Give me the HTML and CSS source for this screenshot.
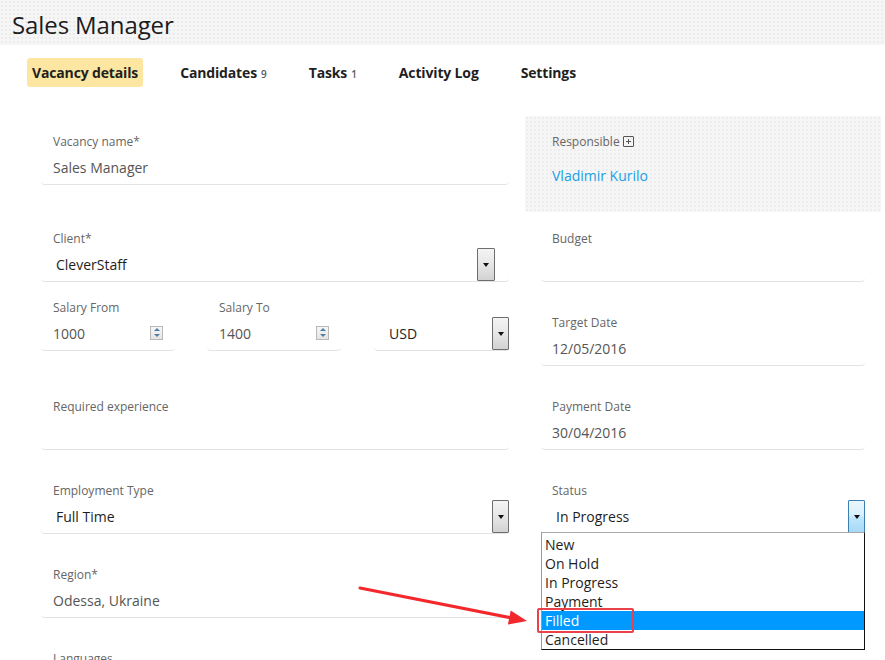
FILE: index.html
```html
<!DOCTYPE html>
<html>
<head>
<meta charset="utf-8">
<link rel="stylesheet" href="styles.css">
</head>
<body>
<div class="page">
  <header class="header"><h1 class="title">Sales Manager</h1></header>
  <nav class="tabs">
    <span class="tab active">Vacancy details</span>
    <span class="tab">Candidates <small class="count">9</small></span>
    <span class="tab">Tasks <small class="count">1</small></span>
    <span class="tab">Activity Log</span>
    <span class="tab">Settings</span>
  </nav>

  <div class="form">
    <!-- Row A -->
    <div class="cell">
      <div class="field first">
        <div class="label">Vacancy name*</div>
        <div class="value">Sales Manager</div>
      </div>
    </div>
    <div class="cell">
      <div class="resp-box">
        <div class="label flush">Responsible <span class="plus-icon"></span></div>
        <div class="resp-name">Vladimir Kurilo</div>
      </div>
    </div>

    <!-- Row B -->
    <div class="cell">
      <div class="field">
        <div class="label">Client*</div>
        <div class="value select-row"><span class="sel-text">CleverStaff</span><span class="drop-btn inset"></span></div>
      </div>
      <div class="salary-row">
        <div class="field salary">
          <div class="label">Salary From</div>
          <div class="value spin-row"><span>1000</span><span class="spinner"><i class="up"></i><i class="down"></i></span></div>
        </div>
        <div class="field salary">
          <div class="label">Salary To</div>
          <div class="value spin-row"><span>1400</span><span class="spinner"><i class="up"></i><i class="down"></i></span></div>
        </div>
        <div class="field currency">
          <div class="label">&nbsp;</div>
          <div class="value select-row"><span class="sel-text">USD</span><span class="drop-btn"></span></div>
        </div>
      </div>
    </div>
    <div class="cell">
      <div class="field">
        <div class="label r">Budget</div>
        <div class="value"></div>
      </div>
      <div class="field target">
        <div class="label r">Target Date</div>
        <div class="value r">12/05/2016</div>
      </div>
    </div>

    <!-- Row C -->
    <div class="cell">
      <div class="field">
        <div class="label">Required experience</div>
        <div class="value"></div>
      </div>
    </div>
    <div class="cell">
      <div class="field">
        <div class="label r">Payment Date</div>
        <div class="value r">30/04/2016</div>
      </div>
    </div>

    <!-- Row D -->
    <div class="cell">
      <div class="field">
        <div class="label">Employment Type</div>
        <div class="value select-row"><span class="sel-text">Full Time</span><span class="drop-btn"></span></div>
      </div>
    </div>
    <div class="cell">
      <div class="field status">
        <div class="label r">Status</div>
        <div class="value select-row"><span class="sel-text">In Progress</span><span class="drop-btn focus"></span></div>
        <ul class="dropdown">
          <li>New</li>
          <li>On Hold</li>
          <li>In Progress</li>
          <li>Payment</li>
          <li class="selected">Filled<span class="mark"></span></li>
          <li>Cancelled</li>
        </ul>
      </div>
    </div>

    <!-- Row E -->
    <div class="cell">
      <div class="field">
        <div class="label">Region*</div>
        <div class="value">Odessa, Ukraine</div>
      </div>
    </div>
    <div class="cell"></div>

    <!-- Row F -->
    <div class="cell">
      <div class="field">
        <div class="label">Languages</div>
        <div class="value"></div>
      </div>
    </div>
    <div class="cell"></div>
  </div>

  <svg class="annot" width="885" height="660" viewBox="0 0 885 660">
    <line x1="360" y1="588" x2="512" y2="618" stroke="#f2282c" stroke-width="3" stroke-linecap="round"/>
    <polygon points="527,621 507.9,624.6 510.7,610.4" fill="#f2282c"/>
  </svg>
</div>
</body>
</html>
```

FILE: styles.css
```css
* { box-sizing: border-box; }
html, body { margin: 0; padding: 0; background: #fff; }
body {
  font-family: "Open Sans", "Noto Sans", sans-serif;
  color: #222;
  width: 885px;
  height: 660px;
  overflow: hidden;
}
.page { position: relative; width: 885px; height: 660px; overflow: hidden; }

.header {
  height: 45px;
  background-color: #f6f6f6;
  background-image: radial-gradient(circle, #ebebeb 0.7px, transparent 0.9px);
  background-size: 4px 4px;
  display: flex;
  align-items: center;
}
.title {
  margin: 4px 0 0 12px;
  font-size: 24px;
  font-weight: 400;
  color: #1c1c1c;
  line-height: 32px;
  letter-spacing: -0.1px;
}

.tabs {
  display: flex;
  gap: 32px;
  margin: 13px 0 0 27px;
  height: 29px;
}
.tab {
  display: flex;
  align-items: center;
  padding: 0 5px;
  height: 29px;
  font-size: 14px;
  font-weight: 700;
  color: #1f1f1f;
  border-radius: 3px;
  white-space: nowrap;
  letter-spacing: -0.15px;
}
.tab.active { background: #fde6a1; }
.count {
  font-size: 10px;
  font-weight: 600;
  color: #555c66;
  margin-left: 4px;
  margin-top: 3px;
  letter-spacing: 0;
}

.form {
  display: grid;
  grid-template-columns: 468px 324px;
  column-gap: 32px;
  row-gap: 33px;
  margin: 46px 0 0 41px;
  align-items: start;
}

.field {
  position: relative;
  border-bottom: 1px solid #e3e3e3;
  border-radius: 0 0 4px 4px;
  padding-bottom: 4px;
}
.field.first { margin-top: 1px; }
.label {
  font-size: 12px;
  line-height: 16px;
  height: 16px;
  color: #666;
  padding-left: 12px;
  display: flex;
  align-items: center;
  white-space: nowrap;
}
.label.r { padding-left: 11px; }
.value {
  font-size: 14px;
  line-height: 24px;
  height: 24px;
  margin-top: 6px;
  color: #555;
  padding-left: 12px;
  white-space: nowrap;
}
.value.r { padding-left: 11px; }

.select-row {
  display: flex;
  align-items: center;
  justify-content: space-between;
  padding-left: 15px;
}
.sel-text { color: #1e1e1e; }
.drop-btn {
  width: 17px;
  height: 33px;
  margin-top: -5px;
  margin-bottom: -4px;
  align-self: flex-start;
  border: 1px solid #6e6e6e;
  border-radius: 1px;
  background: linear-gradient(to bottom, #f4f4f4 0%, #e6e6e6 50%, #d2d2d2 100%);
  display: flex;
  align-items: center;
  justify-content: center;
}
.drop-btn::after {
  content: "";
  width: 0;
  height: 0;
  border-left: 3.5px solid transparent;
  border-right: 3.5px solid transparent;
  border-top: 4px solid #111;
}
.drop-btn.inset { margin-right: 14px; width: 18px; }
.drop-btn.focus {
  border-color: #3c7fb1;
  background: linear-gradient(to bottom, #eaf6fd 0%, #d9f0fc 45%, #bee6fd 55%, #a7d9f5 100%);
}

.salary-row {
  display: flex;
  margin-top: 18px;
}
.field.salary { width: 134px; }
.field.salary + .field.salary { margin-left: 32px; }
.field.currency { width: 135px; margin-left: 33px; }

.spin-row {
  display: flex;
  align-items: center;
  justify-content: space-between;
  padding-right: 12px;
}
.spinner {
  width: 13px;
  height: 14px;
  border: 1px solid #b9b9b9;
  background: linear-gradient(#f7f7f7, #e4e4e4);
  display: flex;
  flex-direction: column;
  align-items: center;
  justify-content: space-around;
  margin-top: -3px;
}
.spinner i {
  display: block;
  width: 0;
  height: 0;
  border-left: 3px solid transparent;
  border-right: 3px solid transparent;
}
.spinner .up { border-bottom: 3px solid #4f7fa8; }
.spinner .down { border-top: 3px solid #4f7fa8; }

.field.target { margin-top: 33px; }

.resp-box {
  margin: -17px -16px -14px -16px;
  padding: 18px 16px 24px 16px;
  height: 96px;
  background-color: #f6f6f6;
  background-image: radial-gradient(circle, #ececec 0.7px, transparent 0.9px);
  background-size: 4px 4px;
}
.resp-box .label { padding-left: 11px; }
.plus-icon {
  display: inline-block;
  position: relative;
  width: 11px;
  height: 11px;
  border: 1px solid #555;
  border-radius: 1px;
  margin-left: 3px;
  margin-top: -2px;
}
.plus-icon::before, .plus-icon::after {
  content: "";
  position: absolute;
  background: #555;
}
.plus-icon::before { left: 2px; right: 2px; top: 4px; height: 1px; }
.plus-icon::after { top: 2px; bottom: 2px; left: 4px; width: 1px; }
.resp-name {
  margin-top: 14px;
  padding-left: 11px;
  font-size: 14px;
  line-height: 24px;
  color: #1aa0e6;
}

.dropdown {
  position: absolute;
  left: 0;
  right: 0;
  top: calc(100% - 1px);
  margin: 0;
  padding: 2px 0 0 0;
  list-style: none;
  background: #fff;
  border: 1px solid #111;
  border-left-color: #9a9a9a;
  border-top-color: #a8a8a8;
  z-index: 5;
}
.dropdown li {
  position: relative;
  height: 19px;
  line-height: 19px;
  font-size: 14px;
  color: #1e1e1e;
  padding-left: 3px;
}
.dropdown li.selected {
  background: #0099ff;
  color: #fff;
}
.mark {
  position: absolute;
  left: -5px;
  top: -3px;
  width: 97px;
  height: 25px;
  border: 2px solid #e8434a;
  border-radius: 2px;
}

.annot {
  position: absolute;
  left: 0;
  top: 0;
  pointer-events: none;
  z-index: 10;
}
```
